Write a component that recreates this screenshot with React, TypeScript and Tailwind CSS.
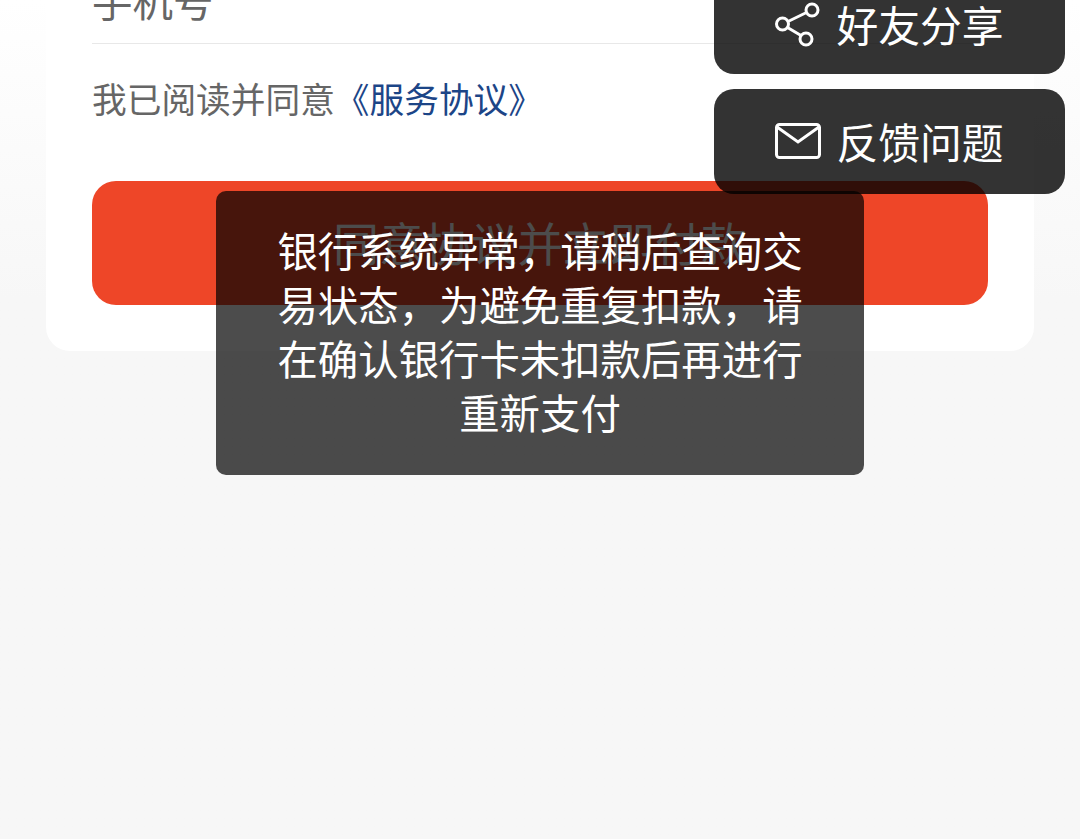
import React from "react";

const cjk = { fontFamily: '"Noto Sans CJK SC", "Noto Sans", sans-serif' };

export default function App() {
  return (
    <div
      className="relative h-[839px] w-[1080px] overflow-hidden bg-gradient-to-b from-white to-[#f7f7f7] to-[300px]"
      style={cjk}
    >
      {/* Card */}
      <div className="mx-[46px] mt-[-40px] flex h-[391px] flex-col rounded-b-[24px] bg-white px-[46px]">
        <div className="flex h-[84px] shrink-0 items-center border-b border-[#e8e8e8] pb-[3px] text-[40.5px] text-[#666666]">
          <span className="leading-none">手机号</span>
        </div>
        <div className="mt-[31px] flex h-[46px] items-center text-[34.7px] leading-none text-[#666666]">
          <span>我已阅读并同意</span>
          <span className="text-[#1c4587]">《服务协议》</span>
        </div>
        <button className="mt-[60px] flex h-[124px] w-full items-center justify-center rounded-[24px] bg-[#ee4628] pb-[4px] text-[46px] text-white">
          同意协议并立即付款
        </button>
      </div>

      {/* Menu */}
      <div className="absolute left-[714px] top-[-31px] flex w-[351px] flex-col gap-[15px]">
        <div className="flex h-[105px] items-center justify-center gap-[15px] rounded-[20px] bg-black/80 pt-[10px] text-[41.8px] text-white">
          <svg width="46" height="46" viewBox="0 0 46 46" fill="none" stroke="white" strokeWidth="3" className="mb-[4px]">
            <circle cx="37" cy="8" r="6" />
            <circle cx="7.5" cy="22" r="6" />
            <circle cx="31" cy="37" r="6" />
            <path d="M13 19.5 L31.5 10.5 M12.5 25.5 L26 33.5" />
          </svg>
          <span className="mb-[4px] leading-none">好友分享</span>
        </div>
        <div className="flex h-[105px] items-center justify-center gap-[15px] rounded-[20px] bg-black/80 text-[41.8px] text-white">
          <svg width="46" height="37" viewBox="0 0 46 37" fill="none" stroke="white" strokeWidth="3">
            <rect x="1.5" y="1.5" width="43" height="33" rx="3" />
            <path d="M2 4 L23 19 L44 4" />
          </svg>
          <span className="leading-none">反馈问题</span>
        </div>
      </div>

      {/* Toast */}
      <div className="absolute left-[216px] top-[191px] flex h-[284px] w-[648px] items-center justify-center rounded-[10px] bg-black/70 pb-[4px] text-center text-[40.4px] leading-[54px] text-white">
        <p className="w-[530px]">
          银行系统异常，请稍后查询交易状态，为避免重复扣款，请在确认银行卡未扣款后再进行重新支付
        </p>
      </div>
    </div>
  );
}
